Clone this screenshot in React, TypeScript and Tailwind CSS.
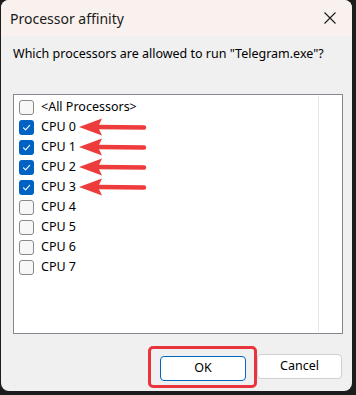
import React from "react";

const cpus = ["<All Processors>", "CPU 0", "CPU 1", "CPU 2", "CPU 3", "CPU 4", "CPU 5", "CPU 6", "CPU 7"];
const checked = [false, true, true, true, true, false, false, false, false];

function Check({ on }: { on: boolean }) {
  if (on) {
    return (
      <div className="w-[15px] h-[15px] rounded-[3px] bg-[#0063c4] flex items-center justify-center shrink-0">
        <svg width="11" height="11" viewBox="0 0 11 11">
          <path d="M2.5 5.8 L4.6 7.8 L8.6 3.4" fill="none" stroke="white" strokeWidth="1.1" strokeLinecap="round" strokeLinejoin="round" />
        </svg>
      </div>
    );
  }
  return <div className="w-[15px] h-[15px] rounded-[3px] border border-[#8a8a8a] bg-[#f7f7f7] shrink-0" />;
}

function Arrow({ y }: { y: number }) {
  return (
    <svg className="absolute left-0 top-0 pointer-events-none" width="160" height="240" viewBox="0 0 160 240">
      <g transform={`translate(0 ${y})`}>
        <path d="M130 0.5 L84 0" stroke="#ee3b3b" strokeWidth="4.5" strokeLinecap="round" fill="none" />
        <path d="M65 0 L88 -8.5 L84 0 L88 8.5 Z" fill="#ee3b3b" />
      </g>
    </svg>
  );
}

export default function App() {
  return (
    <div className="w-[356px] h-[395px] bg-[#1c1c1c] pl-[1px]" style={{ fontFamily: '"Noto Sans", "Open Sans", sans-serif' }}>
      <div className="w-[351px] h-[391px] rounded-[8px] bg-[#f0f0f0] flex flex-col overflow-hidden">
        <div className="h-[36px] bg-[#f9f1ee] flex items-center justify-between pl-[9px] pr-[12px] shrink-0">
          <span className="text-[14px] text-[#1a1a1a] leading-none mt-[2px]">Processor affinity</span>
          <svg width="14" height="14" viewBox="0 0 14 14" className="mr-[3px]">
            <path d="M1.5 1.5 L12.5 12.5 M12.5 1.5 L1.5 12.5" stroke="#1a1a1a" strokeWidth="1.1" />
          </svg>
        </div>
        <div className="pl-[12px] pt-[10px] text-[12.5px] leading-[16px] text-[#000]">
          Which processors are allowed to run "Telegram.exe"?
        </div>
        <div className="ml-[12px] mt-[32px] w-[330px] h-[240px] border border-[#828790] bg-white relative flex">
          <div className="flex-1 pt-[2px] pl-[5px]">
            {cpus.map((c, i) => (
              <div key={c} className="h-[20px] flex items-center gap-[7px]">
                <Check on={checked[i]} />
                <span className="text-[12.5px] text-black leading-none">{c}</span>
              </div>
            ))}
          </div>
          <div className="w-[1px] bg-[#e3e9ef] my-[1px] mr-[23px]" />
          <Arrow y={32} />
          <Arrow y={52} />
          <Arrow y={72} />
          <Arrow y={92} />
        </div>
        <div className="flex justify-end gap-[11px] pr-[10px] mt-[20px]">
          <div className="relative">
            <button className="w-[86px] h-[25px] rounded-[4px] bg-white border border-[#0067c0] text-[12.5px] text-black">OK</button>
            <div className="absolute left-[-12px] right-[-11px] top-[-8px] bottom-[-7px] border-[3px] border-[#e8343c] rounded-[5px] pointer-events-none" />
          </div>
          <button className="w-[85px] h-[25px] rounded-[4px] bg-white border border-[#d0d0d0] text-[12.5px] text-black">Cancel</button>
        </div>
      </div>
    </div>
  );
}
